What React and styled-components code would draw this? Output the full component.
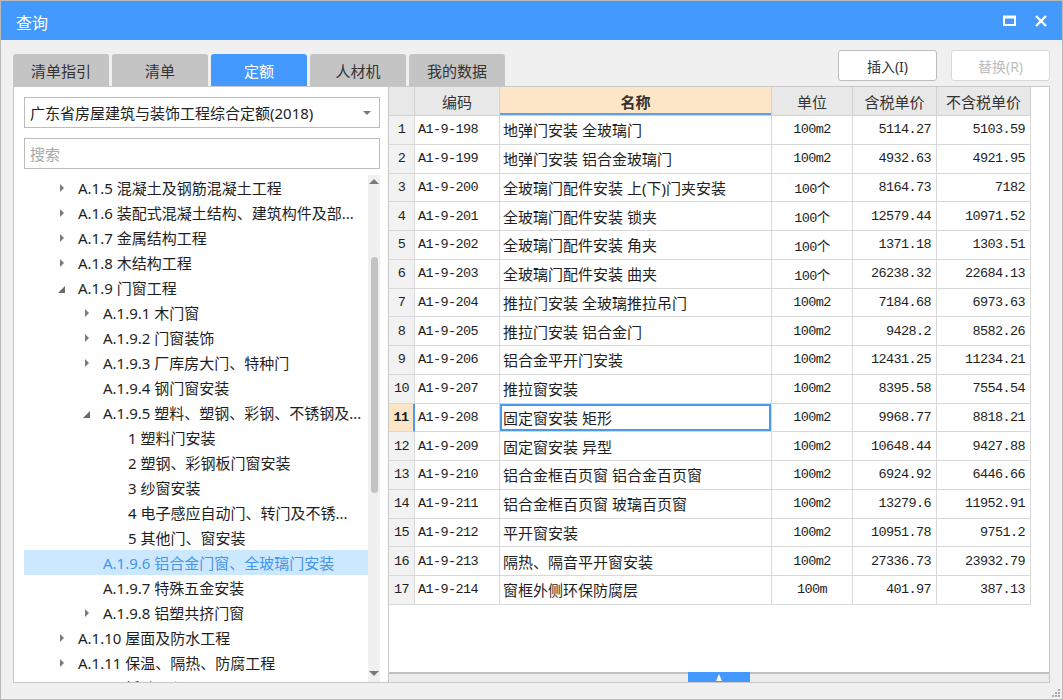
import styled, { createGlobalStyle } from "styled-components";

const GlobalStyle = createGlobalStyle`
  html, body {
    margin: 0;
    padding: 0;
    background: #fff;
  }
  body {
    font-family: "Noto Sans", "Noto Sans CJK SC", sans-serif;
  }
  * { box-sizing: border-box; }
`;

const CJK = `"Noto Sans", "Noto Sans CJK SC", sans-serif`;
const MONO = `"Liberation Mono", "Noto Sans CJK SC", monospace`;

const Window = styled.div`
  width: 1063px;
  height: 700px;
  border: 1px solid #b9b9b9;
  background: #f0f0f0;
  display: flex;
  flex-direction: column;
  overflow: hidden;
`;

const TitleBar = styled.div`
  height: 39px;
  flex: none;
  background: #4499ff;
  display: flex;
  align-items: center;
  padding: 0 11px 0 15px;
  color: #fff;
`;

const Title = styled.span`
  font-family: ${CJK};
  font-size: 16px;
  flex: 1;
  margin-top: 2px;
`;

const WinButton = styled.button`
  width: 21px;
  height: 22px;
  border: none;
  background: transparent;
  padding: 0;
  margin-left: ${p => p.gap || 0}px;
  display: flex;
  align-items: center;
  justify-content: center;
  cursor: pointer;
`;

const Toolbar = styled.div`
  height: 46px;
  flex: none;
  display: flex;
  align-items: flex-start;
  padding: 0 12px;
`;

const Tabs = styled.div`
  display: flex;
  gap: 3px;
  margin-top: 14px;
`;

const Tab = styled.div`
  width: 96px;
  height: 32px;
  border-radius: 3px 3px 0 0;
  background: ${p => (p.active ? "#4499ff" : "#c4c4c4")};
  color: ${p => (p.active ? "#fff" : "#333")};
  font-family: ${CJK};
  font-size: 15px;
  display: flex;
  align-items: center;
  justify-content: center;
`;

const Actions = styled.div`
  margin-left: auto;
  margin-top: 10px;
  display: flex;
  gap: 14px;
`;

const ActionButton = styled.button`
  width: 99px;
  height: 31px;
  background: #fff;
  border: 1px solid ${p => (p.disabled ? "#d8d8d8" : "#bdbdbd")};
  border-radius: 3px;
  font-family: ${CJK};
  font-size: 14px;
  color: ${p => (p.disabled ? "#bdbdbd" : "#333")};
  padding: 0;
`;

const Main = styled.div`
  flex: 1;
  min-height: 0;
  display: flex;
  padding: 0 12px;
`;

const LeftPanel = styled.div`
  width: 375px;
  flex: none;
  background: #fff;
  border: 1px solid #c8c8c8;
  border-right: none;
  padding: 10px 8px 0 10px;
  display: flex;
  flex-direction: column;
`;

const Select = styled.div`
  height: 31px;
  border: 1px solid #bcbcbc;
  display: flex;
  align-items: center;
  padding: 0 8px 0 5px;
  font-family: ${CJK};
  font-size: 15px;
  color: #222;
  span { flex: 1; }
`;

const Caret = styled.i`
  width: 0;
  height: 0;
  border-left: 4px solid transparent;
  border-right: 4px solid transparent;
  border-top: 4px solid #777;
`;

const Search = styled.input`
  height: 31px;
  margin-top: 10px;
  border: 1px solid #bcbcbc;
  outline: none;
  padding: 0 5px;
  font-family: ${CJK};
  font-size: 15px;
  color: #222;
  &::placeholder { color: #a8a8a8; }
`;

const TreeArea = styled.div`
  flex: 1;
  min-height: 0;
  margin-top: 6px;
  display: flex;
`;

const TreeList = styled.div`
  flex: 1;
  overflow: hidden;
`;

const TreeRow = styled.div`
  height: 25px;
  display: flex;
  align-items: center;
  padding-left: ${p => 36 + (p.level - 1) * 25}px;
  background: ${p => (p.selected ? "#cce8ff" : "transparent")};
  color: ${p => (p.selected ? "#4494ea" : "#1e1e1e")};
  font-family: ${CJK};
  font-size: 15px;
  white-space: nowrap;
`;

const ArrowSlot = styled.span`
  width: 18px;
  flex: none;
  display: flex;
  align-items: center;
`;

const ClosedArrow = styled.i`
  width: 0;
  height: 0;
  border-left: 4px solid #7c7c7c;
  border-top: 4px solid transparent;
  border-bottom: 4px solid transparent;
`;

const OpenArrow = styled.i`
  width: 0;
  height: 0;
  margin-left: -2px;
  margin-top: 3px;
  border-bottom: 7px solid #6a6a6a;
  border-left: 7px solid transparent;
`;

const ScrollBar = styled.div`
  width: 12px;
  flex: none;
  background: #f0f0f0;
  display: flex;
  flex-direction: column;
  align-items: center;
`;

const ScrollArrow = styled.i`
  width: 0;
  height: 0;
  flex: none;
  margin: ${p => (p.down ? "auto 0 6px" : "4px 0 0")};
  border-left: 5px solid transparent;
  border-right: 5px solid transparent;
  ${p => (p.down ? "border-top: 5px solid #7a7a7a;" : "border-bottom: 5px solid #7a7a7a;")}
`;

const Thumb = styled.div`
  width: 7px;
  height: ${p => p.size}px;
  margin-top: ${p => p.offset}px;
  border-radius: 4px;
  background: #c3c3c3;
  flex: none;
`;

const RightPanel = styled.div`
  flex: 1;
  background: #fff;
  border: 1px solid #c8c8c8;
  display: flex;
  flex-direction: column;
`;

const TableArea = styled.div`
  flex: 1;
`;

const Grid = styled.div`
  display: grid;
  grid-template-columns: 26px 85px 272px 81px 84px 94px;
  grid-template-rows: 29px;
  grid-auto-rows: 28.75px;
  width: max-content;
`;

const HeadCell = styled.div`
  background: ${p => (p.active ? "#fde6c8" : "#e8e8e8")};
  border-right: 1px solid #d2d2d2;
  border-bottom: 1px solid #d2d2d2;
  ${p => p.active && "box-shadow: inset 0 -2px 0 #5a9ff0;"}
  display: flex;
  align-items: center;
  justify-content: center;
  font-family: ${CJK};
  font-size: 15px;
  font-weight: ${p => (p.active ? 700 : 400)};
  color: #333;
`;

const Cell = styled.div`
  border-right: 1px solid #d8d8d8;
  border-bottom: 1px solid #d8d8d8;
  display: flex;
  align-items: center;
  justify-content: ${p => p.align || "flex-start"};
  padding: 0 ${p => (p.align === "flex-end" ? 5 : 3)}px;
  font-family: ${p => (p.mono ? MONO : CJK)};
  font-size: ${p => (p.mono ? "13.5px" : "15px")};
  letter-spacing: ${p => (p.mono ? "-0.6px" : "0")};
  color: #1e1e1e;
  white-space: nowrap;
  overflow: hidden;
  ${p => p.selected && "box-shadow: inset 0 0 0 2px #4a9af0;"}
`;

const NumCell = styled(Cell)`
  justify-content: center;
  background: ${p => (p.current ? "#fde6c8" : "#f2f2f2")};
  font-weight: ${p => (p.current ? 700 : 400)};
  ${p => p.current && "border-right: 2px solid #4a9af0;"}
  padding: 0;
`;

const Splitter = styled.div`
  height: 10px;
  flex: none;
  border-top: 2px solid #bfbfbf;
  background: #ececec;
  display: flex;
  justify-content: center;
`;

const SplitHandle = styled.div`
  width: 62px;
  height: 10px;
  margin-top: -2px;
  background: #4499ff;
  display: flex;
  align-items: center;
  justify-content: center;
  i {
    width: 0;
    height: 0;
    border-left: 3px solid transparent;
    border-right: 3px solid transparent;
    border-bottom: 7px solid #fff;
  }
`;

const Footer = styled.div`
  height: 16px;
  flex: none;
  display: flex;
  justify-content: flex-end;
  align-items: flex-end;
  padding: 0 1px 1px 0;
`;

const tree = [
  { level: 1, arrow: "closed", label: "A.1.5 混凝土及钢筋混凝土工程" },
  { level: 1, arrow: "closed", label: "A.1.6 装配式混凝土结构、建筑构件及部..." },
  { level: 1, arrow: "closed", label: "A.1.7 金属结构工程" },
  { level: 1, arrow: "closed", label: "A.1.8 木结构工程" },
  { level: 1, arrow: "open", label: "A.1.9 门窗工程" },
  { level: 2, arrow: "closed", label: "A.1.9.1 木门窗" },
  { level: 2, arrow: "closed", label: "A.1.9.2 门窗装饰" },
  { level: 2, arrow: "closed", label: "A.1.9.3 厂库房大门、特种门" },
  { level: 2, label: "A.1.9.4 钢门窗安装" },
  { level: 2, arrow: "open", label: "A.1.9.5 塑料、塑钢、彩钢、不锈钢及..." },
  { level: 3, label: "1 塑料门安装" },
  { level: 3, label: "2 塑钢、彩钢板门窗安装" },
  { level: 3, label: "3 纱窗安装" },
  { level: 3, label: "4 电子感应自动门、转门及不锈..." },
  { level: 3, label: "5 其他门、窗安装" },
  { level: 2, label: "A.1.9.6 铝合金门窗、全玻璃门安装", selected: true },
  { level: 2, label: "A.1.9.7 特殊五金安装" },
  { level: 2, arrow: "closed", label: "A.1.9.8 铝塑共挤门窗" },
  { level: 1, arrow: "closed", label: "A.1.10 屋面及防水工程" },
  { level: 1, arrow: "closed", label: "A.1.11 保温、隔热、防腐工程" },
  { level: 1, arrow: "closed", label: "A.1.12 拆除工程" },
];

const rows = [
  ["A1-9-198", "地弹门安装 全玻璃门", "100m2", "5114.27", "5103.59"],
  ["A1-9-199", "地弹门安装 铝合金玻璃门", "100m2", "4932.63", "4921.95"],
  ["A1-9-200", "全玻璃门配件安装 上(下)门夹安装", "100个", "8164.73", "7182"],
  ["A1-9-201", "全玻璃门配件安装 锁夹", "100个", "12579.44", "10971.52"],
  ["A1-9-202", "全玻璃门配件安装 角夹", "100个", "1371.18", "1303.51"],
  ["A1-9-203", "全玻璃门配件安装 曲夹", "100个", "26238.32", "22684.13"],
  ["A1-9-204", "推拉门安装 全玻璃推拉吊门", "100m2", "7184.68", "6973.63"],
  ["A1-9-205", "推拉门安装 铝合金门", "100m2", "9428.2", "8582.26"],
  ["A1-9-206", "铝合金平开门安装", "100m2", "12431.25", "11234.21"],
  ["A1-9-207", "推拉窗安装", "100m2", "8395.58", "7554.54"],
  ["A1-9-208", "固定窗安装 矩形", "100m2", "9968.77", "8818.21"],
  ["A1-9-209", "固定窗安装 异型", "100m2", "10648.44", "9427.88"],
  ["A1-9-210", "铝合金框百页窗 铝合金百页窗", "100m2", "6924.92", "6446.66"],
  ["A1-9-211", "铝合金框百页窗 玻璃百页窗", "100m2", "13279.6", "11952.91"],
  ["A1-9-212", "平开窗安装", "100m2", "10951.78", "9751.2"],
  ["A1-9-213", "隔热、隔音平开窗安装", "100m2", "27336.73", "23932.79"],
  ["A1-9-214", "窗框外侧环保防腐层", "100m", "401.97", "387.13"],
];

const CURRENT = 11;

function App() {
  return (
    <>
      <GlobalStyle />
      <Window>
        <TitleBar>
          <Title>查询</Title>
          <WinButton>
            <svg width="13" height="11" viewBox="0 0 13 11">
              <rect x="1" y="1.5" width="11" height="8.5" fill="none" stroke="#fff" strokeWidth="2" />
              <rect x="1" y="1" width="11" height="2.5" fill="#fff" />
            </svg>
          </WinButton>
          <WinButton gap={10}>
            <svg width="12" height="12" viewBox="0 0 12 12">
              <path d="M1 1 L11 11 M11 1 L1 11" stroke="#fff" strokeWidth="2.4" />
            </svg>
          </WinButton>
        </TitleBar>

        <Toolbar>
          <Tabs>
            <Tab>清单指引</Tab>
            <Tab>清单</Tab>
            <Tab active>定额</Tab>
            <Tab>人材机</Tab>
            <Tab>我的数据</Tab>
          </Tabs>
          <Actions>
            <ActionButton>插入(I)</ActionButton>
            <ActionButton disabled>替换(R)</ActionButton>
          </Actions>
        </Toolbar>

        <Main>
          <LeftPanel>
            <Select>
              <span>广东省房屋建筑与装饰工程综合定额(2018)</span>
              <Caret />
            </Select>
            <Search placeholder="搜索" />
            <TreeArea>
              <TreeList>
                {tree.map(node => (
                  <TreeRow key={node.label} level={node.level} selected={node.selected}>
                    <ArrowSlot>
                      {node.arrow === "closed" && <ClosedArrow />}
                      {node.arrow === "open" && <OpenArrow />}
                    </ArrowSlot>
                    {node.label}
                  </TreeRow>
                ))}
              </TreeList>
              <ScrollBar>
                <ScrollArrow />
                <Thumb offset={73} size={236} />
                <ScrollArrow down />
              </ScrollBar>
            </TreeArea>
          </LeftPanel>

          <RightPanel>
            <TableArea>
              <Grid>
                <HeadCell />
                <HeadCell>编码</HeadCell>
                <HeadCell active>名称</HeadCell>
                <HeadCell>单位</HeadCell>
                <HeadCell>含税单价</HeadCell>
                <HeadCell>不含税单价</HeadCell>
                {rows.map((r, i) => {
                  const n = i + 1;
                  const cur = n === CURRENT;
                  return [
                    <NumCell key={`n${n}`} mono current={cur}>{n}</NumCell>,
                    <Cell key={`c${n}`} mono>{r[0]}</Cell>,
                    <Cell key={`m${n}`} selected={cur}>{r[1]}</Cell>,
                    <Cell key={`u${n}`} mono align="center">{r[2]}</Cell>,
                    <Cell key={`p${n}`} mono align="flex-end">{r[3]}</Cell>,
                    <Cell key={`q${n}`} mono align="flex-end">{r[4]}</Cell>,
                  ];
                })}
              </Grid>
            </TableArea>
            <Splitter>
              <SplitHandle><i /></SplitHandle>
            </Splitter>
          </RightPanel>
        </Main>

        <Footer>
          <svg width="10" height="10" viewBox="0 0 10 10">
            {[[8, 2], [5, 5], [8, 5], [2, 8], [5, 8], [8, 8]].map(([x, y]) => (
              <rect key={`${x}-${y}`} x={x - 1} y={y - 1} width="2" height="2" fill="#a9a9a9" />
            ))}
          </svg>
        </Footer>
      </Window>
    </>
  );
}

export default App;
